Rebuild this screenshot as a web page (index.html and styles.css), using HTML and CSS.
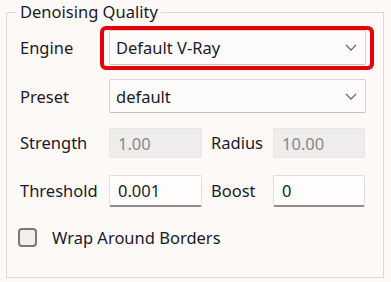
FILE: index.html
```html
<!DOCTYPE html>
<html>
	<head>
		<meta charset="utf-8">
		<title>Denoising Quality</title>
		<link rel="stylesheet" href="styles.css">
	</head>
	<body>
		<fieldset class="group">
			<legend>Denoising Quality</legend>
			<div class="form">
				<label class="label">Engine</label>
				<div class="combo wide highlight">
					<span>Default V-Ray</span>
					<svg class="chevron" width="12" height="7" viewBox="0 0 12 7"><path d="M1 1 L6 6 L11 1" fill="none" stroke="#6b6b6b" stroke-width="1.3"/></svg>
				</div>

				<label class="label">Preset</label>
				<div class="combo wide">
					<span>default</span>
					<svg class="chevron" width="12" height="7" viewBox="0 0 12 7"><path d="M1 1 L6 6 L11 1" fill="none" stroke="#6b6b6b" stroke-width="1.3"/></svg>
				</div>

				<label class="label short">Strength</label>
				<input class="field short" type="text" value="1.00" disabled>
				<label class="label sub short">Radius</label>
				<input class="field short" type="text" value="10.00" disabled>

				<label class="label">Threshold</label>
				<input class="field" type="text" value="0.001">
				<label class="label sub">Boost</label>
				<input class="field" type="text" value="0">
			</div>
			<label class="check">
				<span class="box"></span>
				<span>Wrap Around Borders</span>
			</label>
		</fieldset>
	</body>
</html>
```

FILE: styles.css
```css
html {
	height: 100%;
}

body {
	margin: 0;
	background-color: #fcf9f7;
	font-family: "Noto Sans", "Open Sans", sans-serif;
	font-size: 16.5px;
	color: #1c1a2a;
}

.group {
	margin: 3px 7px 0 6px;
	padding: 0 0 0 13px;
	border: 1px solid #dcd9d7;
	height: 275px;
	box-sizing: border-box;
}

.group legend {
	padding: 0 3px;
	margin-left: -3px;
	line-height: 18px;
}

.form {
	display: grid;
	grid-template-columns: 89px 93px 71px 92px;
	grid-template-rows: 35px 35px 33px 32px;
	row-gap: 14px;
	align-items: center;
	margin-top: 9px;
}

.label {
	line-height: 20px;
}

.label.short {
	align-self: start;
	line-height: 30px;
}

.label.sub {
	padding-left: 9px;
}

.combo {
	height: 100%;
	box-sizing: border-box;
	display: flex;
	align-items: center;
	justify-content: space-between;
	padding: 0 8px 0 6px;
	background-color: #fdfbfa;
	border: 1px solid #d7d4d2;
	border-bottom-color: #c4c1bf;
	border-radius: 2px;
}

.combo.wide {
	grid-column: 2 / 5;
	margin-right: -1px;
}

.form > .combo:nth-child(4) {
	height: 34px;
	align-self: start;
}

.highlight {
	position: relative;
}

.highlight::after {
	content: "";
	position: absolute;
	left: -10px;
	right: -9px;
	top: -5px;
	bottom: -6px;
	border: 4px solid #e8000b;
	border-radius: 6px;
}

.field {
	height: 100%;
	width: 100%;
	box-sizing: border-box;
	font: inherit;
	color: #1c1a2a;
	padding: 0 0 0 8px;
	margin: 0;
	background-color: #fefdfc;
	border: 1px solid #e2dfdd;
	border-bottom: 2px solid #8f8d8c;
	border-radius: 2px;
	outline: none;
}

.field.short {
	height: 30px;
	align-self: start;
}

.field:disabled {
	background-color: #efedeb;
	color: #8a8888;
	border: 1px solid #e8e6e4;
}

.check {
	display: flex;
	align-items: center;
	margin-top: 19px;
	margin-left: -2px;
}

.box {
	width: 15px;
	height: 15px;
	border: 2px solid #7a7878;
	border-radius: 4px;
	background-color: #f2f0ef;
	margin-right: 15px;
}
```
